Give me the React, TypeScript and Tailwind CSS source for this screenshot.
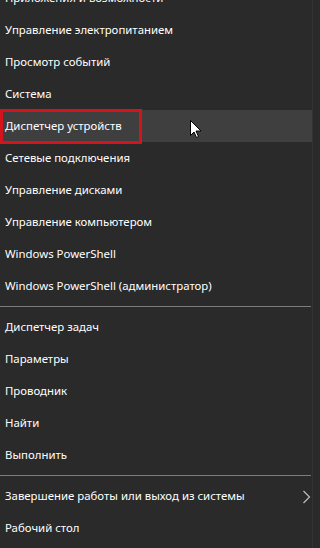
import React from "react";

const groups: string[][] = [
  [
    "Приложения и возможности",
    "Управление электропитанием",
    "Просмотр событий",
    "Система",
    "Диспетчер устройств",
    "Сетевые подключения",
    "Управление дисками",
    "Управление компьютером",
    "Windows PowerShell",
    "Windows PowerShell (администратор)",
  ],
  ["Диспетчер задач", "Параметры", "Проводник", "Найти", "Выполнить"],
  ["Завершение работы или выход из системы", "Рабочий стол"],
];

export default function App() {
  return (
    <div
      className="w-[320px] h-[548px] overflow-hidden bg-[#2a2a2a] flex"
      style={{ fontFamily: '"Noto Sans", "Open Sans", sans-serif' }}
    >
      <div className="w-[313px] shrink-0 flex flex-col mt-[-18px] border-r border-[#333333]">
        {groups.map((g, gi) => (
          <React.Fragment key={gi}>
            {gi > 0 && (
              <div className="h-[9px] flex items-center shrink-0">
                <div className="h-px w-[311px] bg-[#7c7c7c]" />
              </div>
            )}
            {g.map((t) => {
              const hl = t === "Диспетчер устройств";
              const chevron = t.startsWith("Завершение");
              return (
                <div
                  key={t}
                  className={`relative h-[32px] shrink-0 flex items-center pl-[5px] text-[11.4px] text-white ${
                    hl ? "bg-[#3f3f3f]" : ""
                  }`}
                >
                  <span className="leading-none">{t}</span>
                  {hl && (
                    <>
                      <div className="absolute left-0 top-[-1px] w-[142px] h-[35px] border-[3px] border-[#d4141c]" />
                      <svg
                        className="absolute left-[190px] top-[10px]"
                        width="12"
                        height="19"
                        viewBox="0 0 12 19"
                      >
                        <path
                          d="M0.5 0.5 L0.5 15.5 L4 12 L6.5 17.5 L8.5 16.5 L6 11 L11 11 Z"
                          fill="#ffffff"
                          stroke="#000000"
                          strokeWidth="1"
                          strokeLinejoin="miter"
                        />
                      </svg>
                    </>
                  )}
                  {chevron && (
                    <svg
                      className="absolute left-[302px] top-[10px]"
                      width="9"
                      height="14"
                      viewBox="0 0 9 14"
                    >
                      <path d="M1.5 1 L7.5 7 L1.5 13" fill="none" stroke="#bdbdbd" strokeWidth="1.2" />
                    </svg>
                  )}
                </div>
              );
            })}
          </React.Fragment>
        ))}
      </div>
    </div>
  );
}
